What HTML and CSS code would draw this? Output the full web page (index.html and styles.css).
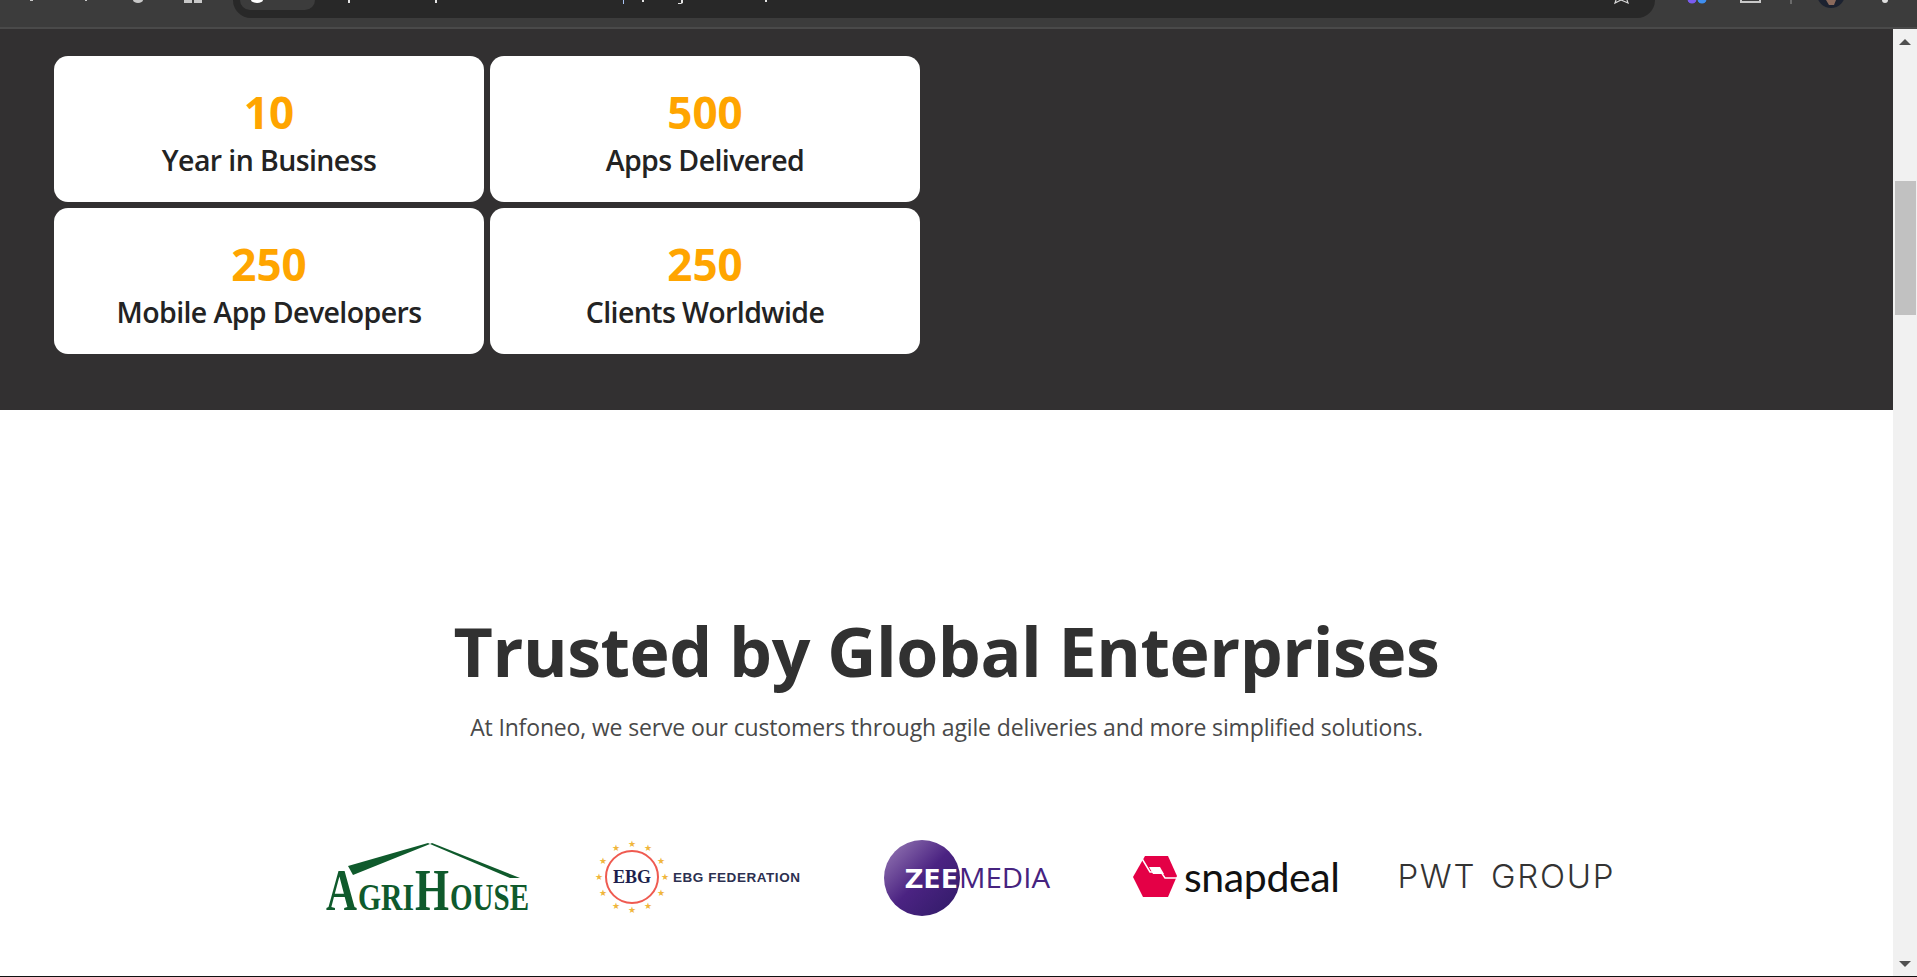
FILE: index.html
```html
<!DOCTYPE html>
<html>
<head>
<meta charset="utf-8">
<title>Infoneo</title>
<link rel="stylesheet" href="styles.css">
</head>
<body>
<div class="toolbar">
	<div class="addressbar"><div class="sitechip"></div></div>
	<!-- bits of browser icons and url text, cut off by the top edge -->
	<svg class="toolbar-bits" viewBox="0 0 1917 27">
		<g fill="#c8c8c8">
			<rect x="30" y="0" width="3" height="1"/>
			<rect x="85" y="0" width="2" height="1"/>
			<path d="M133 0 H143 A5 3 0 0 1 133 0 Z"/>
			<rect x="184" y="0" width="8" height="3"/>
			<rect x="194" y="0" width="8" height="3"/>
			<path d="M251 0 H263 A6 3 0 0 1 251 0 Z" fill="#fff"/>
			<path d="M1740 0 V3 H1761 V0 H1759 V1 H1742 V0 Z"/>
			<rect x="1790" y="0" width="2" height="4" fill="#6a6a6a"/>
			<circle cx="1885" cy="0" r="3" fill="#e0e0e0"/>
		</g>
		<path d="M1616 0 L1615 3 L1621 0 L1628 3 L1627 0" fill="none" stroke="#d8d8d8" stroke-width="1.2"/>
		<g fill="#e4e4e4">
			<rect x="348" y="0" width="2" height="3"/>
			<rect x="435" y="0" width="2" height="3"/>
			<rect x="623" y="0" width="1" height="4" fill="#a9c4f5"/>
			<rect x="642" y="0" width="2" height="2"/>
			<path d="M681 0 H683 V3 L681 4 H678 V3 H681 Z"/>
			<rect x="765" y="0" width="2" height="2"/>
		</g>
		<circle cx="1692" cy="-1" r="4.5" fill="#7a5cf0"/>
		<circle cx="1702" cy="-1" r="4.5" fill="#3f8ff0"/>
		<circle cx="1831" cy="-6" r="14" fill="#1c2230"/>
		<path d="M1826 0 H1836 L1834 5 H1829 Z" fill="#8a6a5c"/>
	</svg>
</div>
<div class="window">
	<div class="page">
		<section class="stats">
			<div class="stat-grid">
				<div class="card"><b>10</b><span>Year in Business</span></div>
				<div class="card"><b>500</b><span>Apps Delivered</span></div>
				<div class="card"><b>250</b><span>Mobile App Developers</span></div>
				<div class="card"><b>250</b><span>Clients Worldwide</span></div>
			</div>
		</section>
		<section class="trusted">
			<h1>Trusted by Global Enterprises</h1>
			<p>At Infoneo, we serve our customers through agile deliveries and more simplified solutions.</p>
			<div class="logos">
				<svg class="logo-agri" viewBox="0 0 206 100">
					<path d="M23 38 L103 15 L105 16 L28 47 Z" fill="#0f5a2c"/>
					<path d="M107 15 L195 50 L185 50 L105 16 Z" fill="#0f5a2c"/>
					<text class="agri-text agri-cap" x="1" y="82" textLength="31" lengthAdjust="spacingAndGlyphs">A</text>
					<text class="agri-text" x="33" y="82" textLength="56" lengthAdjust="spacingAndGlyphs">GRI</text>
					<text class="agri-text agri-cap" x="90" y="82" textLength="34" lengthAdjust="spacingAndGlyphs">H</text>
					<text class="agri-text" x="125" y="82" textLength="79" lengthAdjust="spacingAndGlyphs">OUSE</text>
				</svg>
				<svg class="logo-ebg" viewBox="0 0 208 80">
					<g class="ebg-stars" text-anchor="middle">
						<text x="37" y="10">★</text><text x="53" y="14">★</text><text x="66" y="27">★</text><text x="70" y="43">★</text><text x="66" y="59">★</text><text x="53" y="72">★</text><text x="37" y="76">★</text><text x="21" y="72">★</text><text x="8" y="59">★</text><text x="4" y="43">★</text><text x="8" y="27">★</text><text x="21" y="14">★</text>
					</g>
					<circle cx="37" cy="40" r="26" fill="none" stroke="#ef5a50" stroke-width="2"/>
					<text class="ebg-mark" x="37" y="46" text-anchor="middle">EBG</text>
					<text class="ebg-name" x="78" y="45" textLength="127">EBG FEDERATION</text>
				</svg>
				<svg class="logo-zee" viewBox="0 0 170 80">
					<defs>
						<linearGradient id="zeefill" x1="0" y1="0" x2="1" y2="1">
							<stop offset="0" stop-color="#9b7fb8"/>
							<stop offset="0.5" stop-color="#4b2382"/>
							<stop offset="1" stop-color="#2f1a66"/>
						</linearGradient>
					</defs>
					<circle cx="38" cy="40" r="38" fill="url(#zeefill)"/>
					<text class="zee-a" x="21" y="50" textLength="53" lengthAdjust="spacingAndGlyphs">ZEE</text>
					<text class="zee-b" x="75" y="50" textLength="91" lengthAdjust="spacingAndGlyphs">MEDIA</text>
				</svg>
				<div class="logo-snap">
					<svg viewBox="0 0 44 41">
						<path d="M12 0 H35 L44 20 L35 41 H10 L0 21 Z" fill="#e40046"/>
						<path d="M16 11 H27 L31 18 H20 Z" fill="#fff"/>
						<path d="M8 1 L17 16 H28 L32 22 H44" fill="none" stroke="#fff" stroke-width="1.5"/>
					</svg>
					<span>snapdeal</span>
				</div>
				<div class="logo-pwt">PWT GROUP</div>
			</div>
		</section>
	</div>
	<div class="scrollbar">
		<div class="arrow-up"></div>
		<div class="thumb"></div>
		<div class="arrow-down"></div>
	</div>
</div>
<div class="bottomline"></div>
</body>
</html>
```

FILE: styles.css
```css
html, body{
	margin: 0;
	height: 100%;
	overflow: hidden;
	font-family: "Open Sans", "Noto Sans", sans-serif;
	background: #fff;
}
body{
	display: flex;
	flex-direction: column;
}

.toolbar{
	height: 27px;
	flex: none;
	background: #3c3c3c;
	border-bottom: 2px solid #4a4a4a;
	padding-left: 233px;
	padding-right: 262px;
	position: relative;
}
.addressbar{
	height: 18px;
	background: #282828;
	border-radius: 0 0 24px 24px;
	padding-left: 7px;
}
.sitechip{
	width: 75px;
	height: 10px;
	background: #3c3c3c;
	border-radius: 0 0 12px 12px;
}
.toolbar-bits{
	position: absolute;
	left: 0;
	top: 0;
	width: 1917px;
	height: 27px;
}

.window{
	flex: 1;
	display: flex;
	min-height: 0;
}
.page{
	flex: 1;
	min-width: 0;
}

.stats{
	background: #323031;
	padding: 27px 54px 56px;
}
.stat-grid{
	display: grid;
	grid-template-columns: 430px 430px;
	grid-auto-rows: 146px;
	gap: 6px;
}
.card{
	background: #fff;
	border-radius: 14px;
	padding-top: 12px;
	box-sizing: border-box;
	display: flex;
	flex-direction: column;
	align-items: center;
	justify-content: center;
	color: #232323;
}
.card b{
	font-size: 44px;
	line-height: 50px;
	color: #ffa500;
	font-weight: 700;
}
.card span{
	font-size: 28.5px;
	line-height: 47px;
	font-weight: 600;
	letter-spacing: -0.6px;
}

.trusted{
	padding-top: 196px;
	text-align: center;
}
.trusted h1{
	margin: 0;
	font-size: 68px;
	line-height: 90px;
	font-weight: 700;
	color: #313131;
	letter-spacing: -0.45px;
}
.trusted p{
	margin: 14px 0 0;
	font-size: 23px;
	line-height: 34px;
	color: #494949;
	letter-spacing: -0.15px;
}

.logos{
	margin-top: 84px;
	padding-left: 325px;
	display: flex;
	align-items: center;
}
.logo-agri{
	width: 206px;
	height: 100px;
}
.agri-text{
	font-family: "Liberation Serif", serif;
	font-size: 38px;
	font-weight: 700;
	fill: #0f5a2c;
}
.agri-cap{
	font-size: 60px;
}
.logo-ebg{
	width: 208px;
	height: 80px;
	margin-left: 64px;
	margin-bottom: 3px;
}
.ebg-stars{
	font-family: "DejaVu Sans", sans-serif;
	font-size: 9px;
	fill: #f0b63c;
}
.ebg-mark{
	font-family: "Liberation Serif", serif;
	font-weight: 700;
	font-size: 18px;
	fill: #1d1f4c;
}
.ebg-name{
	font-family: "Liberation Sans", sans-serif;
	font-size: 13.5px;
	font-weight: 700;
	fill: #2c3050;
}
.logo-zee{
	width: 170px;
	height: 80px;
	margin-left: 81px;
}
.zee-a, .zee-b{
	font-family: "Open Sans", sans-serif;
	font-size: 27px;
}
.zee-a{
	font-weight: 700;
	fill: #fff;
}
.zee-b{
	font-weight: 400;
	fill: #46237f;
}
.logo-snap{
	margin-left: 79px;
	margin-bottom: 3px;
	display: flex;
	align-items: center;
	gap: 7px;
}
.logo-snap svg{
	width: 44px;
	height: 41px;
}
.logo-snap span{
	font-family: "Lato", sans-serif;
	font-size: 41px;
	line-height: 50px;
	color: #111;
	letter-spacing: -0.4px;
}
.logo-pwt{
	margin-left: 58px;
	margin-bottom: 4px;
	font-family: "Inter", sans-serif;
	font-weight: 300;
	font-size: 33px;
	color: #333;
	white-space: nowrap;
	letter-spacing: 1.7px;
	word-spacing: 4px;
}

.scrollbar{
	width: 24px;
	flex: none;
	background: #f1f1f1;
	position: relative;
}
.arrow-up{
	margin: 10px auto 0;
	width: 0;
	height: 0;
	border-left: 6px solid transparent;
	border-right: 6px solid transparent;
	border-bottom: 6px solid #505050;
}
.arrow-down{
	position: absolute;
	left: 6px;
	bottom: 9px;
	width: 0;
	height: 0;
	border-left: 6px solid transparent;
	border-right: 6px solid transparent;
	border-top: 6px solid #505050;
}
.thumb{
	position: absolute;
	left: 2px;
	right: 1px;
	top: 152px;
	height: 134px;
	background: #c1c1c1;
}

.bottomline{
	height: 1px;
	flex: none;
	background: #111;
}
```
